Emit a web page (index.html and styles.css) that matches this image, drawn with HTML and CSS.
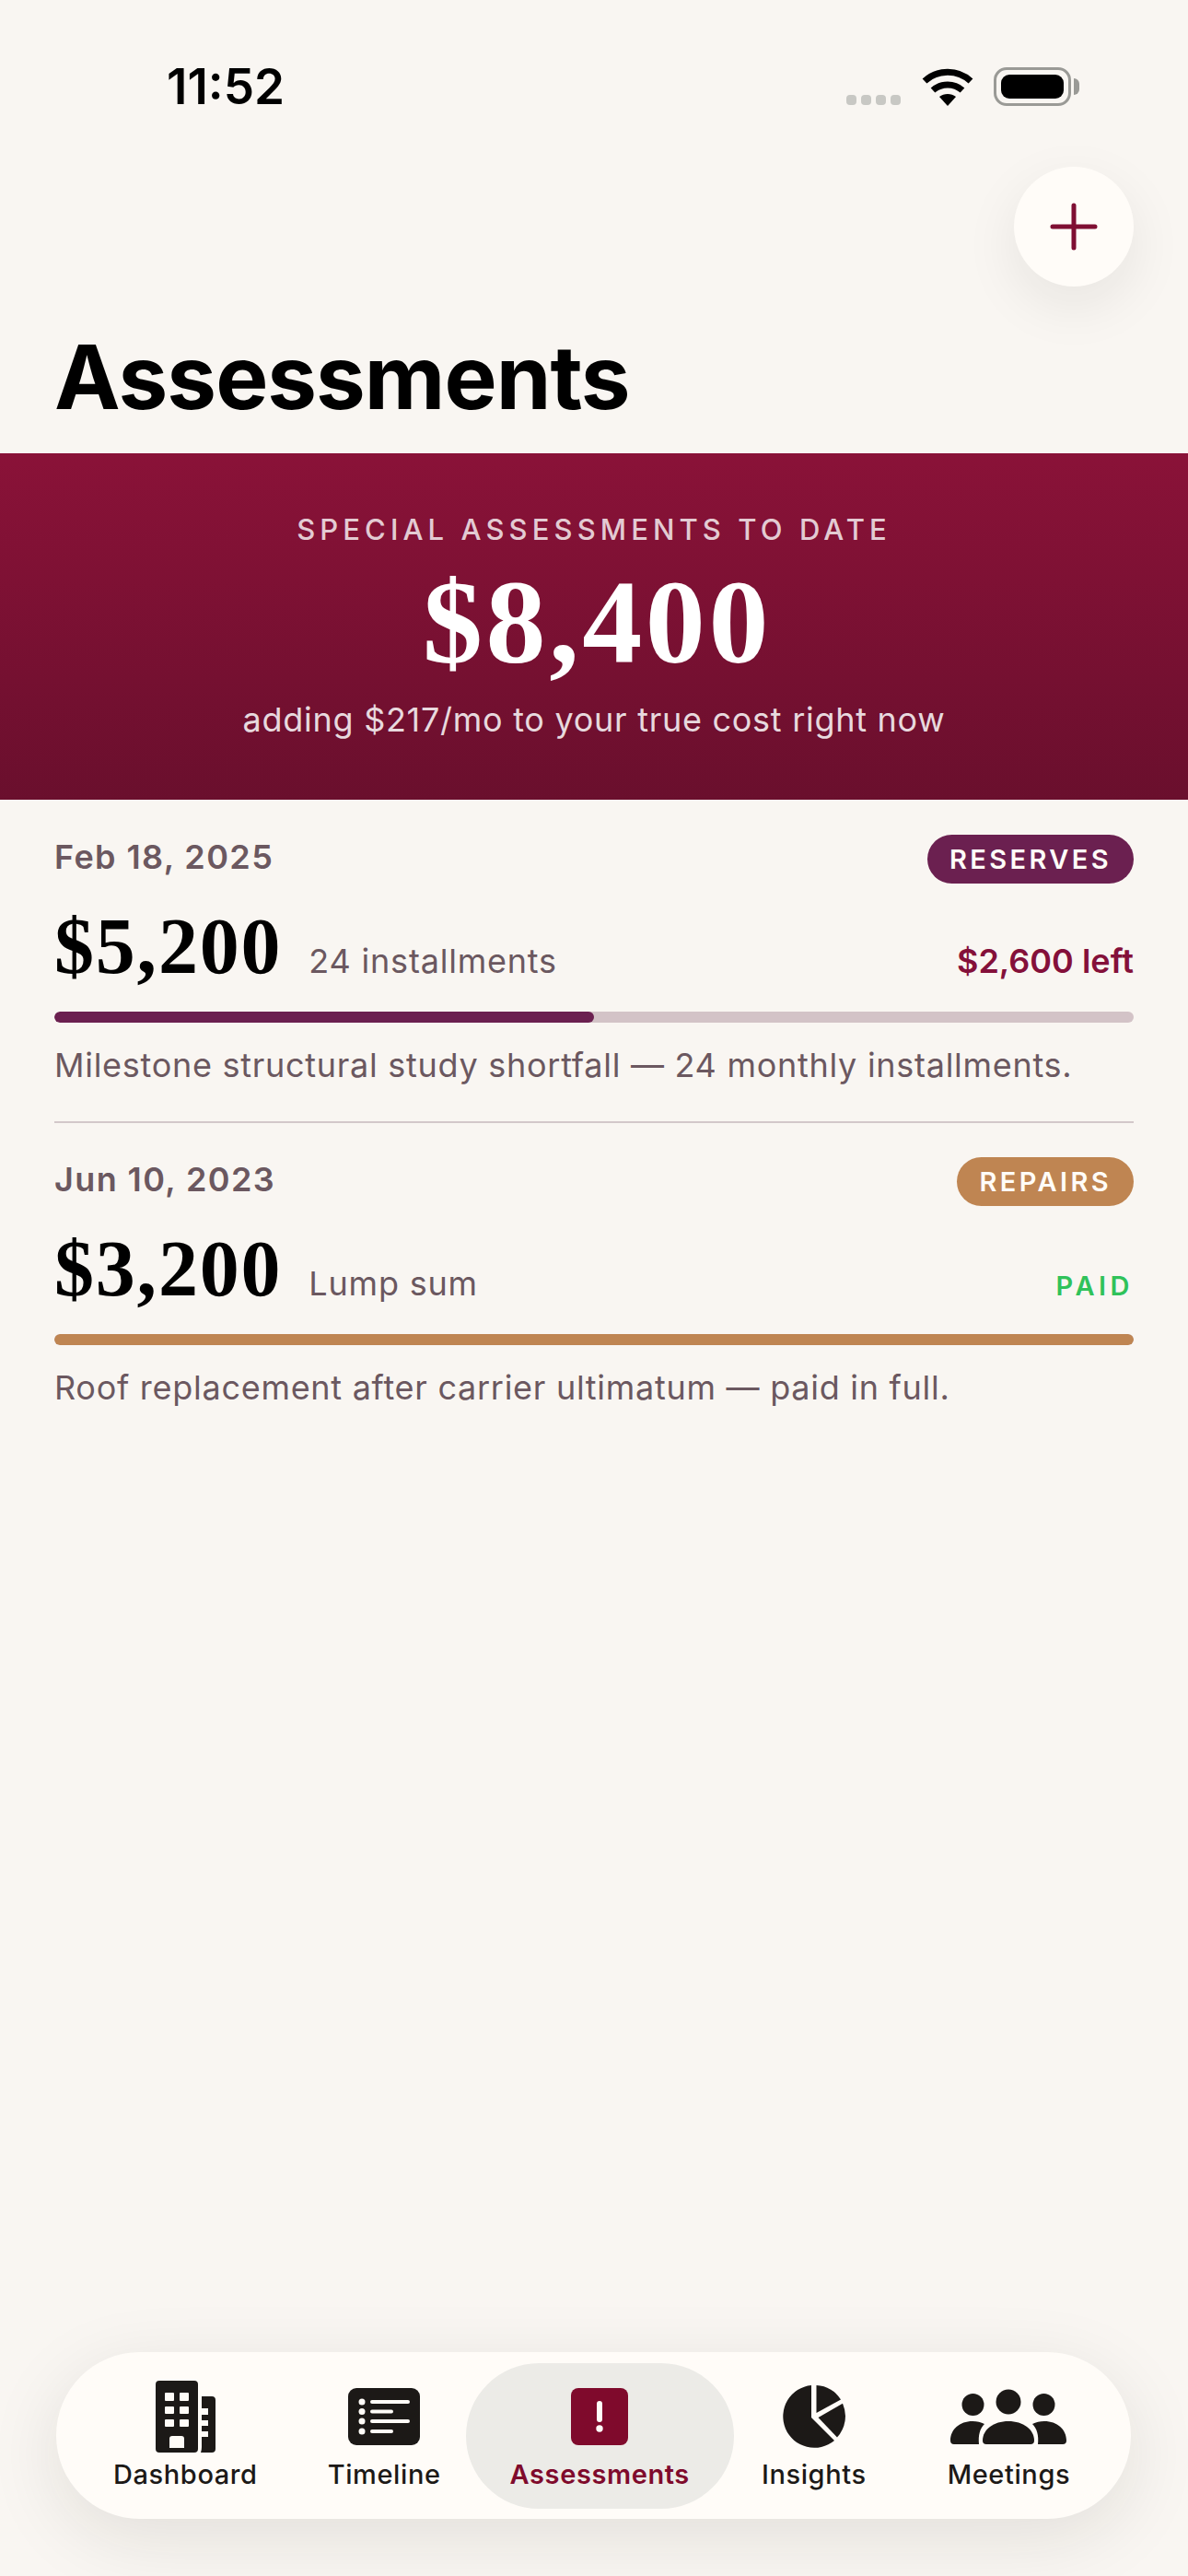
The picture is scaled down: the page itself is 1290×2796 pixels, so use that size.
FILE: index.html
```html
<!DOCTYPE html>
<html lang="en">

<head>
    <meta charset="UTF-8">
    <meta name="viewport" content="width=device-width, initial-scale=1.0">
    <title>Assessments</title>
    <link rel="stylesheet" href="styles.css">
</head>

<body>
    <div class="app">
        <header class="status-bar">
            <span class="time">11:52</span>
            <div class="status-icons">
                <div class="signal"><i></i><i></i><i></i><i></i></div>
                <svg class="wifi" width="56" height="41" viewBox="0 0 56 41">
                    <path d="M3 14 C17 1 39 1 53 14" fill="none" stroke="#000" stroke-width="7" />
                    <path d="M12 24 C21 16 35 16 44 24" fill="none" stroke="#000" stroke-width="7" />
                    <path d="M19 31 C24 27 32 27 37 31 L28 41 Z" fill="#000" />
                </svg>
                <div class="battery"><div class="battery-level"></div></div>
            </div>
        </header>

        <div class="fab-row">
            <button class="fab" type="button">
                <svg width="52" height="52" viewBox="0 0 52 52">
                    <path d="M26 3 V49 M3 26 H49" fill="none" stroke="#7f0f33" stroke-width="5" stroke-linecap="round" />
                </svg>
            </button>
        </div>

        <h1 class="title">Assessments</h1>

        <section class="hero">
            <p class="hero-label">SPECIAL ASSESSMENTS TO DATE</p>
            <p class="hero-amount">$8,400</p>
            <p class="hero-sub">adding $217/mo to your true cost right now</p>
        </section>

        <section class="list">
            <article class="row">
                <div class="row-head">
                    <span class="date">Feb 18, 2025</span>
                    <span class="badge badge-reserves">RESERVES</span>
                </div>
                <div class="row-amount">
                    <span class="amount">$5,200</span>
                    <span class="note">24 installments</span>
                    <span class="left">$2,600 left</span>
                </div>
                <div class="track"><div class="fill fill-reserves" style="width: 50%"></div></div>
                <p class="desc">Milestone structural study shortfall — 24 monthly installments.</p>
            </article>

            <article class="row">
                <div class="row-head">
                    <span class="date">Jun 10, 2023</span>
                    <span class="badge badge-repairs">REPAIRS</span>
                </div>
                <div class="row-amount">
                    <span class="amount">$3,200</span>
                    <span class="note">Lump sum</span>
                    <span class="paid">PAID</span>
                </div>
                <div class="track"><div class="fill fill-repairs" style="width: 100%"></div></div>
                <p class="desc">Roof replacement after carrier ultimatum — paid in full.</p>
            </article>
        </section>

        <nav class="tabbar">
            <a class="tab">
                <svg class="tab-icon" width="65" height="78" viewBox="0 0 65 78">
                    <path fill="#1c1917" fill-rule="evenodd" d="M4 0 H42 Q46 0 46 4 V74 Q46 78 42 78 H4 Q0 78 0 74 V4 Q0 0 4 0 Z M11 13 Q10 13 10 14 V21 Q10 22 11 22 H19 Q20 22 20 21 V14 Q20 13 19 13 Z M27 13 Q26 13 26 14 V21 Q26 22 27 22 H35 Q36 22 36 21 V14 Q36 13 35 13 Z M11 28 Q10 28 10 29 V35 Q10 36 11 36 H19 Q20 36 20 35 V29 Q20 28 19 28 Z M27 28 Q26 28 26 29 V35 Q26 36 27 36 H35 Q36 36 36 35 V29 Q36 28 35 28 Z M11 42 Q10 42 10 43 V49 Q10 50 11 50 H19 Q20 50 20 49 V43 Q20 42 19 42 Z M27 42 Q26 42 26 43 V49 Q26 50 27 50 H35 Q36 50 36 49 V43 Q36 42 35 42 Z M18 60 Q15 60 15 63 V73 H31 V63 Q31 60 28 60 Z" />
                    <path fill="#1c1917" d="M50 17 H61 Q65 17 65 21 V74 Q65 78 61 78 H49 Q50 75 50 72 V61 H57 V55 H50 V49 H57 V43 H50 V37 H57 V30 H50 Z" />
                </svg>
                <span class="tab-label">Dashboard</span>
            </a>
            <a class="tab">
                <svg class="tab-icon" width="78" height="62" viewBox="0 0 78 62">
                    <rect width="78" height="62" rx="9" fill="#1c1917" />
                    <g fill="#fffcf8">
                        <circle cx="15" cy="15" r="3.5" />
                        <circle cx="15" cy="25.5" r="3.5" />
                        <circle cx="15" cy="36" r="3.5" />
                        <circle cx="15" cy="47" r="3.5" />
                        <rect x="24" y="13" width="43" height="4" rx="2" />
                        <rect x="24" y="23.5" width="25" height="4" rx="2" />
                        <rect x="24" y="34" width="43" height="4" rx="2" />
                        <rect x="24" y="45" width="25" height="4" rx="2" />
                    </g>
                </svg>
                <span class="tab-label">Timeline</span>
            </a>
            <a class="tab tab-active">
                <svg class="tab-icon" width="62" height="62" viewBox="0 0 62 62">
                    <rect width="62" height="62" rx="8" fill="#7f0a2c" />
                    <rect x="28" y="14" width="6" height="23" rx="3" fill="#fffcf8" />
                    <circle cx="31" cy="44" r="3.7" fill="#fffcf8" />
                </svg>
                <span class="tab-label">Assessments</span>
            </a>
            <a class="tab">
                <svg class="tab-icon" width="68" height="68" viewBox="0 0 68 68">
                    <g fill="#1c1917">
                        <path d="M31 35 V0 A34 34 0 1 0 56 60 Z" />
                        <path d="M36.5 30 V0 A34 34 0 0 1 63 15.5 Z" />
                        <path d="M38.5 35 L65 19.7 A34 34 0 0 1 59 56.5 Z" />
                    </g>
                </svg>
                <span class="tab-label">Insights</span>
            </a>
            <a class="tab tab-last">
                <svg class="tab-icon" width="126" height="60" viewBox="0 0 126 60">
                    <g fill="#1c1917">
                        <circle cx="63" cy="14" r="13.5" />
                        <circle cx="24.5" cy="17" r="12" />
                        <circle cx="101.5" cy="17" r="12" />
                        <path d="M35 56 C35 44 47 35 63 35 C79 35 91 44 91 56 Q91 60 87 60 H39 Q35 60 35 56 Z" />
                        <path d="M0 56 C0 44 10 35 24 35 C29 35 33 36 37 38 C32 43 30 50 31 60 H4 Q0 60 0 56 Z" />
                        <path d="M126 56 C126 44 116 35 102 35 C97 35 93 36 89 38 C94 43 96 50 95 60 H122 Q126 60 126 56 Z" />
                    </g>
                </svg>
                <span class="tab-label">Meetings</span>
            </a>
        </nav>
    </div>
</body>

</html>
```

FILE: styles.css
```css
* {
    box-sizing: border-box;
}

body {
    margin: 0;
    background-color: #f9f6f2;
    font-family: "Inter", "Liberation Sans", sans-serif;
    color: #000000;
}

p,
h1 {
    margin: 0;
}

.app {
    height: 2796px;
    display: flex;
    flex-direction: column;
    overflow: hidden;
}

/* status bar */
.status-bar {
    height: 181px;
    padding: 73px 127px 0 181px;
    display: flex;
    justify-content: space-between;
    align-items: flex-start;
}

.time {
    font-size: 53px;
    line-height: 42px;
    font-weight: 600;
}

.status-icons {
    display: flex;
    align-items: flex-end;
    height: 42px;
}

.signal {
    display: flex;
    gap: 5px;
    margin-right: 23px;
    padding-bottom: 1px;
}

.signal i {
    width: 11px;
    height: 11px;
    border-radius: 4px;
    background-color: #c8c8c4;
}

.wifi {
    margin-right: 22px;
}

.battery {
    position: relative;
    width: 84px;
    height: 42px;
    padding: 5px;
    border: 3px solid #9a9a96;
    border-radius: 14px;
}

.battery::after {
    content: "";
    position: absolute;
    top: 9px;
    right: -12px;
    width: 6px;
    height: 18px;
    border-radius: 0 6px 6px 0;
    background-color: #9a9a96;
}

.battery-level {
    height: 100%;
    border-radius: 9px;
    background-color: #000000;
}

/* add button */
.fab-row {
    display: flex;
    justify-content: flex-end;
    padding-right: 59px;
}

.fab {
    width: 130px;
    height: 130px;
    padding: 0;
    border: none;
    border-radius: 50%;
    background-color: #fffcf8;
    box-shadow: 0 20px 60px rgba(28, 25, 23, 0.08);
    display: flex;
    justify-content: center;
    align-items: center;
}

.title {
    margin-top: 40px;
    margin-bottom: 25px;
    padding-left: 59px;
    font-size: 96px;
    line-height: 116px;
    font-weight: 700;
    letter-spacing: -1px;
}

/* summary banner */
.hero {
    height: 376px;
    padding-top: 63px;
    text-align: center;
    color: #ffffff;
    background: linear-gradient(180deg, #8a1238 0%, #6a0f2d 100%);
}

.hero-label {
    font-size: 31px;
    line-height: 40px;
    font-weight: 500;
    letter-spacing: 5.1px;
    color: rgba(255, 255, 255, 0.8);
}

.hero-amount {
    margin-top: 10px;
    padding-left: 7px;
    font-family: "Liberation Serif", serif;
    font-size: 130px;
    line-height: 140px;
    font-weight: 700;
    letter-spacing: 3.6px;
}

.hero-sub {
    margin-top: 12px;
    font-size: 36px;
    line-height: 48px;
    letter-spacing: 0.72px;
    color: rgba(255, 255, 255, 0.85);
}

/* list */
.list {
    padding: 0 59px;
}

.row {
    padding: 38px 0 37px;
}

.row + .row {
    padding-top: 37px;
    border-top: 2px solid #d3c8ca;
}

.row-head {
    display: flex;
    justify-content: space-between;
    align-items: center;
    height: 53px;
}

.date {
    margin-bottom: 5px;
    font-size: 36px;
    line-height: 44px;
    font-weight: 600;
    letter-spacing: 1.4px;
    color: #6b5860;
}

.badge {
    height: 53px;
    padding: 0 24px;
    border-radius: 27px;
    font-size: 29px;
    line-height: 53px;
    font-weight: 600;
    letter-spacing: 3.4px;
    color: #fffcf8;
}

.badge-reserves {
    background-color: #6b2050;
}

.badge-repairs {
    background-color: #bf8552;
}

.row-amount {
    display: flex;
    align-items: baseline;
    margin-top: 22px;
    height: 92px;
}

.amount {
    font-family: "Liberation Serif", serif;
    font-size: 86px;
    line-height: 92px;
    font-weight: 700;
    letter-spacing: 1.8px;
}

.note {
    margin-left: 29px;
    font-size: 36px;
    letter-spacing: 0.8px;
    color: #6b5860;
}

.left {
    margin-left: auto;
    font-size: 36px;
    font-weight: 600;
    color: #84103a;
}

.paid {
    margin-left: auto;
    font-size: 29px;
    font-weight: 600;
    letter-spacing: 4.5px;
    color: #30c25a;
}

.track {
    height: 12px;
    margin-top: 25px;
    border-radius: 6px;
    background-color: #d3c3c7;
    overflow: hidden;
}

.fill {
    height: 100%;
    border-radius: 6px;
}

.fill-reserves {
    background-color: #6b2050;
}

.fill-repairs {
    background-color: #bf8552;
}

.desc {
    margin-top: 22px;
    font-size: 36px;
    line-height: 48px;
    letter-spacing: 0.72px;
    color: #6b5860;
}

/* bottom tabs */
.tabbar {
    margin: auto 62px 62px 61px;
    height: 181px;
    padding: 0 24px;
    display: flex;
    align-items: center;
    border-radius: 91px;
    background-color: #fffcf8;
    box-shadow: 0 20px 80px rgba(28, 25, 23, 0.1);
}

.tab {
    height: 158px;
    padding: 0 38px;
    display: flex;
    flex-direction: column;
    align-items: center;
    color: #1c1917;
}

.tab-icon {
    height: 78px;
    margin-top: 19px;
    flex-shrink: 0;
}

.tab-label {
    margin-top: 5px;
    font-size: 29px;
    line-height: 38px;
    font-weight: 500;
    letter-spacing: 0.6px;
}

.tab-active {
    margin: 0 -8px 0 -11px;
    padding: 0 48px;
    border-radius: 79px;
    background-color: #ecebe7;
    color: #7f0a2c;
}

.tab-active .tab-label {
    font-weight: 600;
}

.tab-last {
    margin-left: 12px;
}
```
